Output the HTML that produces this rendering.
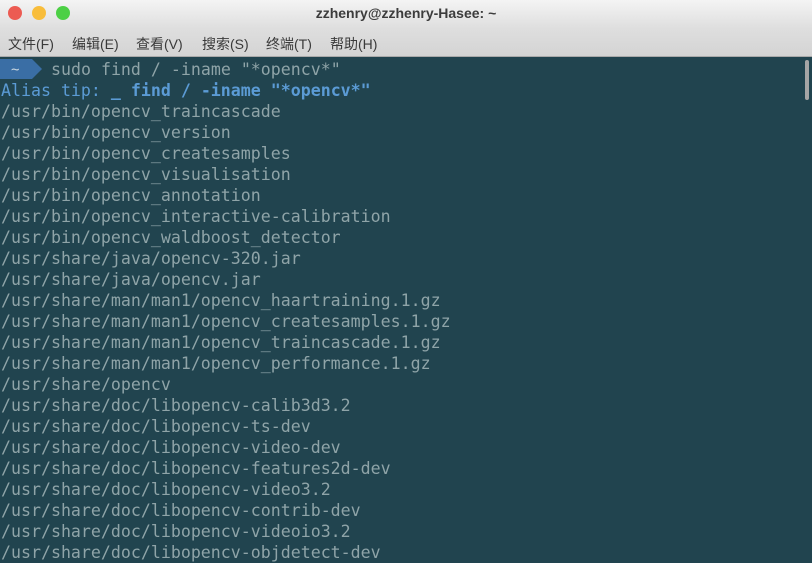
<!DOCTYPE html>
<html><head><meta charset="utf-8"><style>
body{margin:0;width:812px;height:563px;overflow:hidden;background:#21444f;font-family:"Liberation Sans","Noto Sans CJK SC",sans-serif}
.title{position:absolute;left:0;top:0;width:812px;height:29px;background:linear-gradient(#f4f4f4,#dedede);}
.title .t{position:absolute;left:0;width:812px;top:5px;text-align:center;font-weight:bold;font-size:14px;color:#3c3c3c}
.dot{position:absolute;top:6px;width:14px;height:14px;border-radius:50%}
.menu{position:absolute;top:29px;left:0;width:812px;height:27px;background:linear-gradient(#dedede,#d4d4d4);border-bottom:1px solid #aaa;font-size:14px;color:#3a3a3a}
.menu span{position:absolute;top:5px}
.term{position:absolute;top:59px;left:0;width:812px;height:504px;font-family:"DejaVu Sans Mono","Liberation Mono",monospace;font-size:16.6px;color:#8fa4a8;white-space:pre}
.l{position:absolute;left:1px;height:21px;line-height:21px}
.sb{position:absolute;left:805px;top:60px;width:4px;height:40px;background:#a5a5a5;border-radius:2px}
</style></head><body>
<div class="title"><div class="dot" style="left:8px;background:#ec5b52"></div><div class="dot" style="left:32px;background:#f8bd3b"></div><div class="dot" style="left:56px;background:#4cd045"></div><div class="t">zzhenry@zzhenry-Hasee: ~</div></div>
<div class="menu"><span style="left:8px">文件(F)</span><span style="left:72px">编辑(E)</span><span style="left:136px">查看(V)</span><span style="left:202px">搜索(S)</span><span style="left:266px">终端(T)</span><span style="left:330px">帮助(H)</span></div>
<div class="term">
<svg style="position:absolute;left:0;top:0px" width="44" height="20"><polygon points="0,0 32,0 42,10 32,20 0,20" fill="#3a6ea5"/><text x="11" y="15" font-size="14" fill="#c8d6e0" font-family="DejaVu Sans Mono">~</text></svg>
<div class="l" style="top:0;left:51px">sudo find / -iname "*opencv*"</div>
<div class="l" style="top:21px;color:#5b9bd5">Alias tip: <b>_ find / -iname "*opencv*"</b></div>
<div class="l" style="top:42px">/usr/bin/opencv_traincascade</div>
<div class="l" style="top:63px">/usr/bin/opencv_version</div>
<div class="l" style="top:84px">/usr/bin/opencv_createsamples</div>
<div class="l" style="top:105px">/usr/bin/opencv_visualisation</div>
<div class="l" style="top:126px">/usr/bin/opencv_annotation</div>
<div class="l" style="top:147px">/usr/bin/opencv_interactive-calibration</div>
<div class="l" style="top:168px">/usr/bin/opencv_waldboost_detector</div>
<div class="l" style="top:189px">/usr/share/java/opencv-320.jar</div>
<div class="l" style="top:210px">/usr/share/java/opencv.jar</div>
<div class="l" style="top:231px">/usr/share/man/man1/opencv_haartraining.1.gz</div>
<div class="l" style="top:252px">/usr/share/man/man1/opencv_createsamples.1.gz</div>
<div class="l" style="top:273px">/usr/share/man/man1/opencv_traincascade.1.gz</div>
<div class="l" style="top:294px">/usr/share/man/man1/opencv_performance.1.gz</div>
<div class="l" style="top:315px">/usr/share/opencv</div>
<div class="l" style="top:336px">/usr/share/doc/libopencv-calib3d3.2</div>
<div class="l" style="top:357px">/usr/share/doc/libopencv-ts-dev</div>
<div class="l" style="top:378px">/usr/share/doc/libopencv-video-dev</div>
<div class="l" style="top:399px">/usr/share/doc/libopencv-features2d-dev</div>
<div class="l" style="top:420px">/usr/share/doc/libopencv-video3.2</div>
<div class="l" style="top:441px">/usr/share/doc/libopencv-contrib-dev</div>
<div class="l" style="top:462px">/usr/share/doc/libopencv-videoio3.2</div>
<div class="l" style="top:483px">/usr/share/doc/libopencv-objdetect-dev</div>
</div>
<div class="sb"></div>
</body></html>
